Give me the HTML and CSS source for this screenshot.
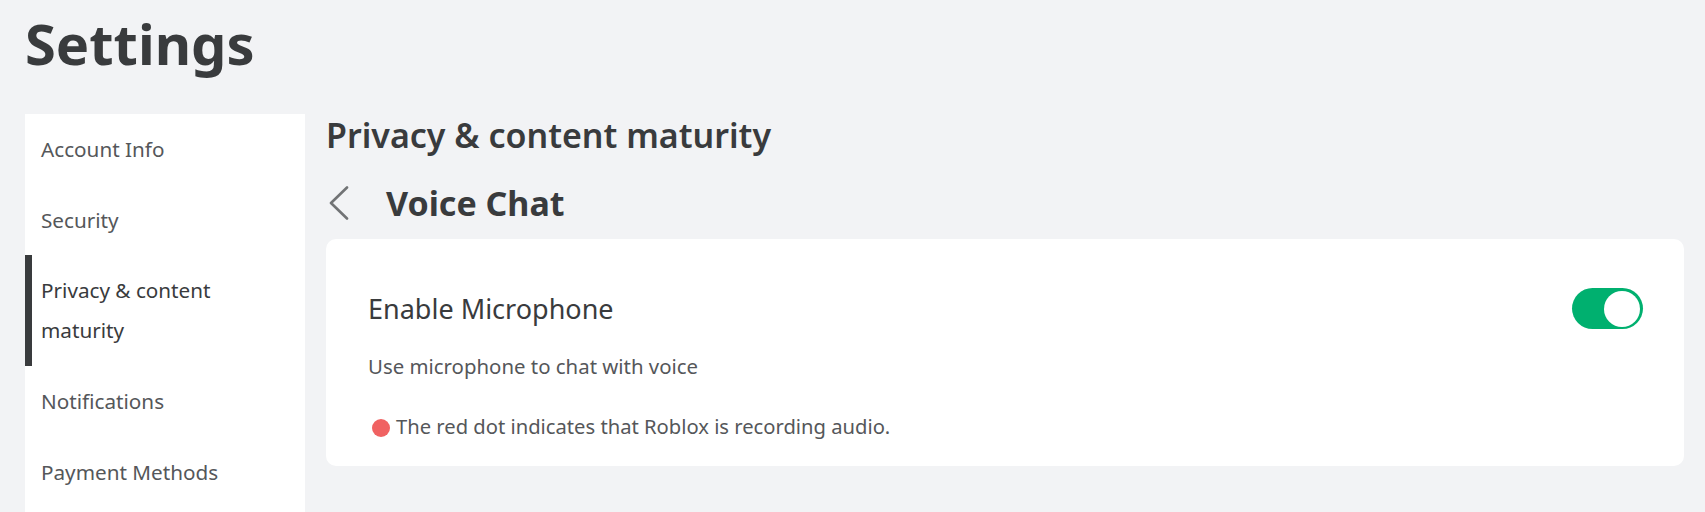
FILE: index.html
```html
<!DOCTYPE html>
<html lang="en">
<head>
<meta charset="utf-8">
<title>Settings</title>
<link rel="stylesheet" href="styles.css">
</head>
<body>
<div class="page">
  <h1 class="page-title">Settings</h1>
  <div class="layout">
    <nav class="sidebar">
      <a class="nav-item">Account Info</a>
      <a class="nav-item">Security</a>
      <a class="nav-item active">Privacy &amp; content maturity</a>
      <a class="nav-item">Notifications</a>
      <a class="nav-item">Payment Methods</a>
    </nav>
    <main class="content">
      <h2 class="section-title">Privacy &amp; content maturity</h2>
      <div class="sub-header">
        <svg class="back" width="20" height="34" viewBox="0 0 20 34" aria-hidden="true">
          <path d="M18 1.5 L2 17 L18 32.5" fill="none" stroke="#717375" stroke-width="2.6" stroke-linecap="round" stroke-linejoin="round"/>
        </svg>
        <h3 class="sub-title">Voice Chat</h3>
      </div>
      <section class="card">
        <div class="row">
          <div class="row-label">Enable Microphone</div>
          <div class="toggle on"><span class="knob"></span></div>
        </div>
        <p class="desc">Use microphone to chat with voice</p>
        <p class="note"><span class="dot"></span>The red dot indicates that Roblox is recording audio.</p>
      </section>
    </main>
  </div>
</div>
</body>
</html>
```
FILE: styles.css
```css
* { box-sizing: border-box; }
html, body {
  margin: 0;
  padding: 0;
  background: #f2f3f5;
  font-family: "Noto Sans", "Open Sans", sans-serif;
  color: #393b3d;
  height: 512px;
  overflow: hidden;
}
.page {
  padding: 0 21px 0 25px;
}
.page-title {
  margin: 0;
  font-size: 56px;
  font-weight: 700;
  line-height: 80px;
  height: 114px;
  padding-top: 3px;
  color: #393b3d;
}
.layout {
  display: flex;
  gap: 21px;
  align-items: flex-start;
}
.sidebar {
  width: 280px;
  flex: none;
  background: #ffffff;
  display: flex;
  flex-direction: column;
  height: 420px;
}
.nav-item {
  display: block;
  padding: 15.3px 60px 15.3px 9px;
  font-size: 20.7px;
  line-height: 40px;
  color: #55575a;
  border-left: 7px solid transparent;
}
.nav-item.active {
  border-left-color: #393b3d;
  color: #393b3d;
}
.content {
  flex: 1;
  display: flex;
  flex-direction: column;
  margin-top: -1px;
}
.section-title {
  margin: 0;
  font-size: 34px;
  font-weight: 600;
  line-height: 44px;
  color: #393b3d;
}
.sub-header {
  display: flex;
  align-items: center;
  gap: 37px;
  height: 82px;
  padding: 10px 0 0 3px;
}
.sub-title {
  margin: 0;
  font-size: 34px;
  font-weight: 700;
  line-height: 40px;
  color: #393b3d;
}
.card {
  background: #ffffff;
  border-radius: 10px;
  padding: 49px 41px 0 42px;
  height: 227px;
}
.row {
  display: flex;
  justify-content: space-between;
  align-items: center;
}
.row-label {
  font-size: 27px;
  line-height: 41px;
  color: #393b3d;
}
.toggle {
  width: 71px;
  height: 41px;
  border-radius: 21px;
  background: #00b06f;
  position: relative;
}
.knob {
  position: absolute;
  right: 3px;
  top: 2.5px;
  width: 36px;
  height: 36px;
  border-radius: 50%;
  background: #ffffff;
}
.desc {
  margin: 22px 0 0 0;
  font-size: 20.4px;
  line-height: 30px;
  color: #55575a;
}
.note {
  margin: 30px 0 0 0;
  font-size: 20.2px;
  line-height: 30px;
  color: #55575a;
  display: flex;
  align-items: center;
}
.dot {
  width: 18px;
  height: 18px;
  border-radius: 50%;
  background: #f06262;
  margin: 3px 6px 0 4px;
  flex: none;
}
```
